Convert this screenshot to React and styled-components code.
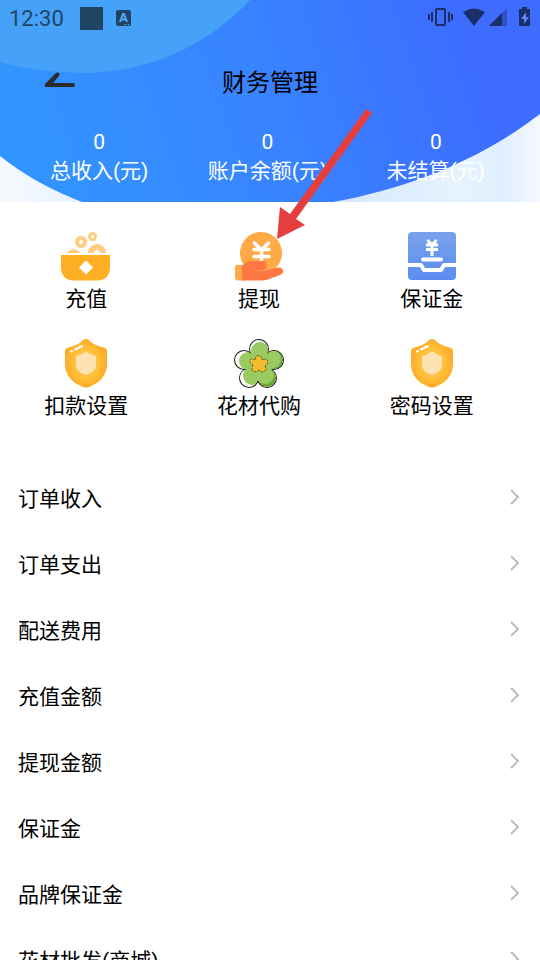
import React from "react";
import styled, { createGlobalStyle } from "styled-components";

const stats = [
  { label: "总收入(元)", value: 0 },
  { label: "账户余额(元)", value: 0 },
  { label: "未结算(元)", value: 0 },
];

const records = [
  "订单收入",
  "订单支出",
  "配送费用",
  "充值金额",
  "提现金额",
  "保证金",
  "品牌保证金",
  "花材批发(商城)",
];

const WalletIcon = () => (
  <svg width="50" height="50" viewBox="0 0 50 50">
    <path
      d="M20 4a6 6 0 1 0 .1 0zM20 7.500l2.500 2.500-2.500 2.500-2.500-2.500z"
      fill="#ffcc80"
      fillRule="evenodd"
    />
    <path
      d="M31.500 0a4.500 4.500 0 1 0 .1 0zM31.500 2.500l2 2-2 2-2-2z"
      fill="#ffcc80"
      fillRule="evenodd"
    />
    <path d="M6 21a7 6 0 0 1 13 0z" fill="#ffcc80" />
    <path d="M27 21a9 9 0 0 1 18 0h-5l-4-4-4 4z" fill="#ffcc80" />
    <path d="M0 23h49v13c0 7-5 12.500-12 12.500H12C5 48.500 0 43 0 36z" fill="#ffaf23" />
    <path d="M25 28.500l7 7-7 7-7-7z" fill="#fff" />
  </svg>
);

const WithdrawIcon = () => (
  <svg width="50" height="50" viewBox="0 0 50 50">
    <circle cx="27" cy="21" r="21" fill="#ffaa46" />
    <path
      d="M20.500 11l7 7 7-7M20 17.500h15M20 24.500h15M27.500 18V32"
      stroke="#fff"
      strokeWidth="3.500"
      strokeLinecap="round"
      fill="none"
    />
    <path d="M4 33h8v15.500H4q-3 0-3-3v-9.500q0-3.500 3-3.500z" fill="#ffaa46" />
    <path
      d="M8 33.500l5-3.500q1-1 3-1h13c5 0 5 7 1 8.500l-4 1h6l12-3c5-1 7 5 3 7l-13 5q-3 1-7 1H8z"
      fill="#ff7743"
    />
    <path d="M20 38.500h9l5-2" stroke="#ff9458" strokeWidth="1" fill="none" />
  </svg>
);

const DepositIcon = () => (
  <svg width="50" height="50" viewBox="0 0 50 50">
    <defs>
      <linearGradient id="deposit" x1="0" y1="0" x2="0" y2="1">
        <stop offset="0" stopColor="#78a2ea" />
        <stop offset="1" stopColor="#5b8df0" />
      </linearGradient>
    </defs>
    <rect x="1" width="48" height="48" rx="4" fill="url(#deposit)" />
    <g stroke="#fff" fill="none">
      <path d="M1 33h13l3 5h17l3-5h12" strokeWidth="4" strokeLinejoin="round" />
      <path d="M16 27.500h18" strokeWidth="4" strokeLinecap="round" />
      <path d="M20.500 8l4.500 5 4.500-5M19 13h12M19 17.500h12M25 12v12" strokeWidth="3" />
    </g>
  </svg>
);

const ShieldIcon = ({ id }) => (
  <svg width="50" height="50" viewBox="0 0 50 50">
    <defs>
      <radialGradient id={id}>
        <stop offset="0" stopColor="#ffcf46" />
        <stop offset="0.6" stopColor="#ffc03b" />
        <stop offset="1" stopColor="#ffab27" />
      </radialGradient>
    </defs>
    <path
      d="M25 0c2 0 3 1 5 3 4 3 8 4 14 6q2 1 2 3v13c0 12-8 19-18 23q-3 1-6 0C12 44 4 37 4 25V12q0-2 2-3c6-2 10-3 14-6 2-2 3-3 5-3z"
      fill={`url(#${id})`}
    />
    <path
      d="M25 12c3 3 6 4 10 5v9c0 5-4 8-10 10-6-2-10-5-10-10v-9c4-1 7-2 10-5z"
      fill="#ffe2b4"
    />
    <path
      d="M14 10.500l7-3.500M10 12.500l1-.5"
      stroke="#fff"
      strokeWidth="2"
      strokeLinecap="round"
    />
  </svg>
);

const petals = [
  { cx: 25, cy: 10, r: 9 },
  { cx: 10, cy: 21, r: 9 },
  { cx: 40, cy: 21, r: 9 },
  { cx: 15, cy: 39, r: 9 },
  { cx: 33, cy: 39, r: 9 },
];

const FlowerIcon = () => (
  <svg width="50" height="50" viewBox="0 0 50 50">
    <defs>
      <clipPath id="flower">
        {petals.map((petal) => (
          <circle key={`${petal.cx}-${petal.cy}`} {...petal} />
        ))}
        <circle cx="25" cy="26" r="13" />
      </clipPath>
    </defs>
    {petals.map((petal) => (
      <circle
        key={`${petal.cx}-${petal.cy}`}
        {...petal}
        fill="none"
        stroke="#151a10"
        strokeWidth="2"
      />
    ))}
    <g clipPath="url(#flower)">
      <rect width="50" height="50" fill="#fff" />
      <path d="M32 10h18v40H25z" fill="#71a53a" />
      <g fill="#9acb62">
        <circle cx="26" cy="12" r="9" />
        <circle cx="14" cy="22" r="9" />
        <circle cx="38" cy="20" r="9" />
        <circle cx="18" cy="37" r="9" />
        <circle cx="31" cy="36" r="9" />
        <circle cx="26" cy="26" r="13" />
      </g>
    </g>
    <path
      d="M21 21c0-6 7-6 7 0 6-3 8 3 3 6 3 6-3 8-6 4-4 4-9 1-6-5-5-3-4-8 2-5z"
      fill="#f2bd2e"
      stroke="#6d6421"
      strokeWidth="1"
      strokeDasharray="3 1"
    />
  </svg>
);

const menus = [
  { label: "充值", icon: <WalletIcon /> },
  { label: "提现", icon: <WithdrawIcon /> },
  { label: "保证金", icon: <DepositIcon /> },
  { label: "扣款设置", icon: <ShieldIcon id="shieldDeduct" /> },
  { label: "花材代购", icon: <FlowerIcon /> },
  { label: "密码设置", icon: <ShieldIcon id="shieldPassword" /> },
];

const HeaderBackground = () => (
  <Background viewBox="0 0 540 202" preserveAspectRatio="none">
    <defs>
      <linearGradient id="sky" x1="0" y1="0" x2="1" y2="0">
        <stop offset="0" stopColor="#f6faff" />
        <stop offset="0.12" stopColor="#eaf4ff" />
        <stop offset="0.65" stopColor="#d6e9fc" />
        <stop offset="0.85" stopColor="#e6f3fe" />
        <stop offset="0.93" stopColor="#deeffd" />
        <stop offset="1" stopColor="#f5f8ff" />
      </linearGradient>
      <linearGradient
        id="sea"
        gradientUnits="userSpaceOnUse"
        x1="0"
        y1="150"
        x2="450"
        y2="0"
      >
        <stop offset="0" stopColor="#3196ff" />
        <stop offset="0.6" stopColor="#3982ff" />
        <stop offset="0.85" stopColor="#3b74ff" />
        <stop offset="1" stopColor="#3d6cff" />
      </linearGradient>
    </defs>
    <rect width="540" height="202" fill="url(#sky)" />
    <path
      d="M0 0H540V114C480 160 410 188 333 202H82Q35 184 0 156z"
      fill="url(#sea)"
    />
    <path d="M0 0H250C205 48 145 73 83 73Q38 73 0 62z" fill="#45a2f8" />
  </Background>
);

const KeyboardIcon = () => (
  <svg width="15" height="17" viewBox="0 0 15 17">
    <rect width="15" height="16" y="0" rx="2" fill="#1f4564" />
    <path
      d="M4 12l3-8h1l3 8M5 9.500h5"
      stroke="#55a9f3"
      strokeWidth="2"
      fill="none"
    />
    <path d="M8 14.500h6" stroke="#55a9f3" strokeDasharray="1 1" />
  </svg>
);

const SignalIcons = () => (
  <Signals width="104" height="22" viewBox="0 0 104 22" fill="#1a2e68">
    <rect
      x="9"
      y="2"
      width="9"
      height="16"
      rx="1"
      fill="none"
      stroke="#1a2e68"
      strokeWidth="2"
    />
    <path d="M1 7h2v6H1zM4 5h2v10H4zM21 5h2v10h-2zM24 7h2v6h-2z" />
    <path d="M36 5Q47-2 58 5L47 19z" />
    <path d="M62 19L80 1v18z" opacity="0.4" />
    <path d="M62 19L75 6v13z" />
    <path d="M95 0h5v2h3v16q0 1-1 1H93q-1 0-1-1V2h3z" />
    <path d="M99 5l-5 7h3v5l5-7h-3z" fill="#5e83f5" />
  </Signals>
);

const App = () => {
  return (
    <Page>
      <GlobalStyle />
      <Header>
        <HeaderBackground />
        <StatusBar>
          <Clock>12:30</Clock>
          <Square />
          <KeyboardIcon />
          <SignalIcons />
        </StatusBar>
        <TitleBar>
          <BackButton aria-label="返回">
            <svg width="32" height="16" viewBox="0 0 32 16">
              <path
                d="M1 12L12 1q2-1 3 0 1 2 0 3l-6 7h20q2 0 2 2t-2 2H2q-2-1-1-3z"
                fill="#2b2b2b"
              />
            </svg>
          </BackButton>
          <Title>财务管理</Title>
        </TitleBar>
        <Stats>
          {stats.map((stat) => (
            <Stat key={stat.label}>
              <span>{stat.value}</span>
              <span>{stat.label}</span>
            </Stat>
          ))}
        </Stats>
        <Pointer width="98" height="132" viewBox="0 0 98 132">
          <path
            d="M90 0l6 4L20 110l9 6-28 14 3-32 10 7z"
            fill="#e43e3e"
          />
        </Pointer>
      </Header>
      <Menu>
        {menus.map((menu) => (
          <MenuButton key={menu.label}>
            {menu.icon}
            <span>{menu.label}</span>
          </MenuButton>
        ))}
      </Menu>
      <Records>
        {records.map((record) => (
          <li key={record}>
            <RecordButton>
              {record}
              <svg width="12" height="18" viewBox="0 0 12 18">
                <path
                  d="M2 2l7 7-7 7"
                  fill="none"
                  stroke="#bcbcbc"
                  strokeWidth="2"
                />
              </svg>
            </RecordButton>
          </li>
        ))}
      </Records>
    </Page>
  );
};

const GlobalStyle = createGlobalStyle`
  * {
    box-sizing: border-box;
  }

  body {
    margin: 0;
    background-color: #ffffff;
    font-family: Roboto, "Noto Sans CJK SC", sans-serif;
    font-size: 21px;
    color: #000000;
  }

  button {
    cursor: pointer;
    padding: 0;
    border: none;
    background: none;
    font: inherit;
    color: inherit;
  }

  svg {
    display: block;
    flex-shrink: 0;
  }
`;

const Page = styled.main`
  height: 100vh;
  overflow: hidden;
`;

const Header = styled.header`
  position: relative;
  padding-bottom: 16px;
`;

const Background = styled.svg`
  position: absolute;
  inset: 0;
  z-index: -1;
  width: 100%;
  height: 100%;
`;

const StatusBar = styled.div`
  display: flex;
  align-items: center;
  height: 36px;
  padding: 0 9px;
`;

const Clock = styled.span`
  margin-right: 16px;
  font-size: 22px;
  color: #1f4564;
`;

const Square = styled.span`
  width: 23px;
  height: 23px;
  margin-right: 13px;
  background-color: #1f4564;
`;

const Signals = styled.svg`
  margin-left: auto;
`;

const TitleBar = styled.div`
  display: grid;
  grid-template-columns: 1fr auto 1fr;
  align-items: center;
  height: 88px;
  padding: 0 44px;
  margin-bottom: 4px;
`;

const BackButton = styled.button`
  justify-self: start;
`;

const Title = styled.h1`
  margin: 0;
  font-size: 24px;
  font-weight: 400;
`;

const Stats = styled.div`
  display: grid;
  grid-template-columns: repeat(3, 1fr);
  padding: 0 20px 0 15px;
  color: #ffffff;
`;

const Stat = styled.div`
  display: flex;
  flex-direction: column;
  align-items: center;
  line-height: 29px;
`;

const Pointer = styled.svg`
  position: absolute;
  top: 109px;
  left: 276px;
  z-index: 1;
  pointer-events: none;
`;

const Menu = styled.nav`
  display: grid;
  grid-template-columns: repeat(3, 1fr);
  row-gap: 23px;
  padding: 30px 22px 41px 0;
`;

const MenuButton = styled.button`
  display: flex;
  flex-direction: column;
  align-items: center;
  line-height: 34px;
`;

const Records = styled.ul`
  margin: 0;
  padding: 0;
  list-style: none;
`;

const RecordButton = styled.button`
  display: flex;
  align-items: center;
  justify-content: space-between;
  width: 100%;
  height: 66px;
  padding: 0 19px 0 18px;
`;

export default App;
